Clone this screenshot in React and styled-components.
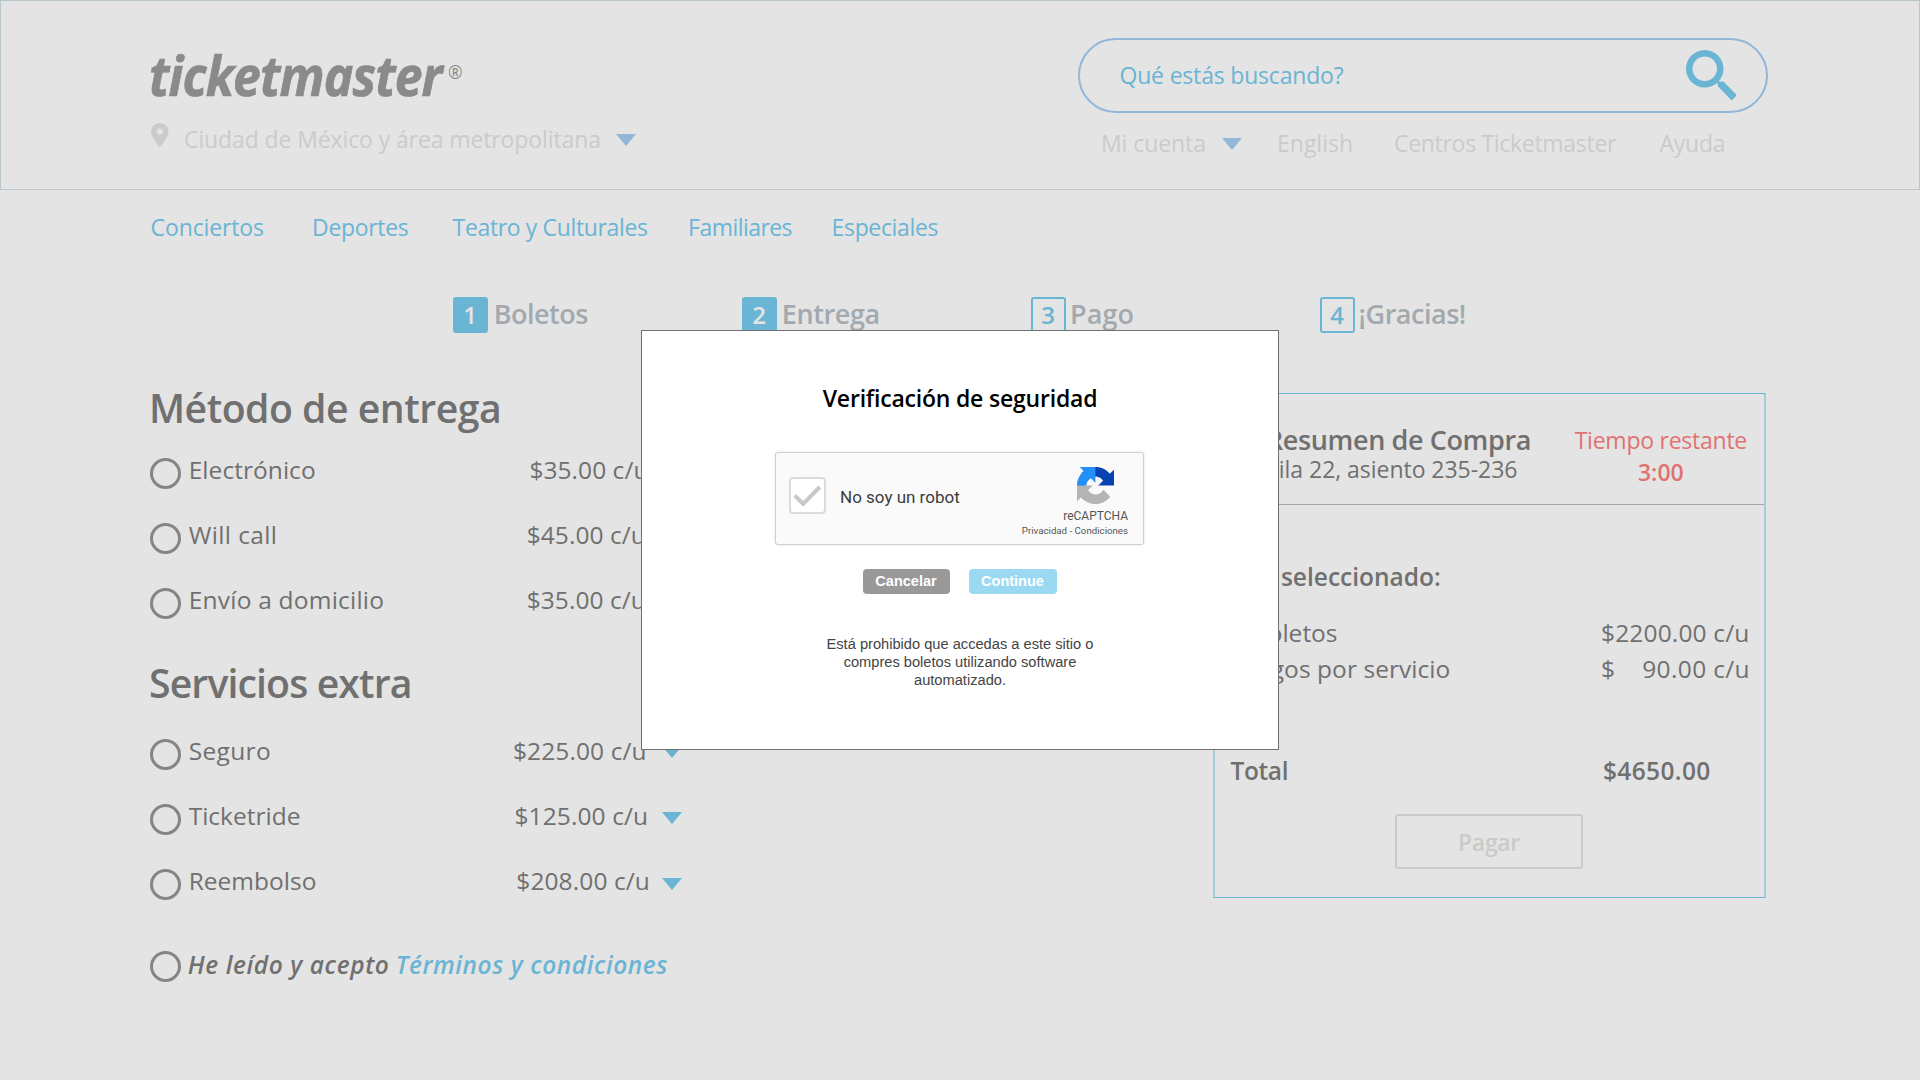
import React from 'react';
import styled, { createGlobalStyle } from 'styled-components';

const sky = '#6ab4d4';
const steel = '#91b7d9';
const muted = '#cbcbcb';
const ink = '#707070';

const GlobalStyle = createGlobalStyle`
  * { box-sizing: border-box; }
  body {
    margin: 0;
    background: #e4e4e4;
    font-family: "Open Sans", "Noto Sans", sans-serif;
    overflow: hidden;
  }
`;

const Page = styled.div`
  position: relative;
  display: flex;
  flex-direction: column;
  width: 1920px;
  height: 1080px;
  overflow: hidden;
  background: #e4e4e4;
  color: ${ink};
  white-space: nowrap;
`;

const Tracked = styled.span`
  letter-spacing: ${(p) => p.$ls || 0}px;
`;

/* Header */
const Header = styled.header`
  display: flex;
  justify-content: space-between;
  height: 190px;
  padding: 0 151px 0 149px;
  border: 1px solid #bac7cc;
`;

const Brand = styled.div`
  display: flex;
  flex-direction: column;
`;

const LogoRow = styled.div`
  display: flex;
  height: 60px;
  margin-top: 43px;
  color: #8a8a8a;
`;

const Logo = styled.div`
  width: 299px;
  margin-left: -1px;
  font-size: 55px;
  line-height: 61px;
  font-weight: 700;
  font-style: italic;
  letter-spacing: -1px;
  -webkit-text-stroke: 0.7px #8a8a8a;
  transform: scaleX(0.907);
  transform-origin: left;
`;

const Registered = styled.span`
  margin-top: 17px;
  font-size: 17.5px;
  line-height: 22px;
`;

const Location = styled.div`
  display: flex;
  align-items: flex-start;
  margin-top: 19px;
  padding-left: 1px;
  font-size: 23px;
  line-height: 32px;
  color: ${muted};
`;

const Place = styled(Tracked)`
  margin-left: 15.5px;
`;

const Caret = styled.i`
  width: 0;
  height: 0;
  margin: ${(p) => p.$top || 0}px 0 0 ${(p) => p.$left || 0}px;
  border: 10px solid transparent;
  border-bottom: 0;
  border-top: 12px solid ${(p) => p.$color || sky};
`;

const HeaderTools = styled.div`
  display: flex;
  flex-direction: column;
  width: 690px;
  padding-top: 37px;
`;

const SearchBox = styled.div`
  display: flex;
  align-items: center;
  justify-content: space-between;
  height: 75px;
  padding: 0 29.5px 1px 39.5px;
  border: 2px solid ${steel};
  border-radius: 38px;
  font-size: 23px;
  color: ${sky};
`;

const AccountLinks = styled.div`
  display: grid;
  grid-template-columns: 121px 55px 117px 265.4px auto;
  margin-top: 14px;
  padding-left: 23px;
  font-size: 23px;
  line-height: 32px;
  color: ${muted};
`;

/* Category nav and steps */
const Nav = styled.nav`
  display: grid;
  grid-template-columns: 161.5px 140.5px 235.5px 143.5px auto;
  margin-top: 17px;
  padding-left: 150.6px;
  font-size: 23px;
  line-height: 40px;
  color: ${sky};
`;

const Steps = styled.ol`
  display: grid;
  grid-template-columns: repeat(4, 289px);
  margin: 50px 0 0;
  padding: 0 0 0 453px;
  list-style: none;
`;

const Step = styled.li`
  display: flex;
  gap: ${(p) => p.$gap}px;
  height: 36px;
`;

const StepNumber = styled.span`
  display: flex;
  align-items: center;
  justify-content: center;
  width: 35px;
  height: 36px;
  padding-right: 1px;
  border: 2px solid ${sky};
  border-radius: 3px;
  background: ${(p) => (p.$done ? sky : 'transparent')};
  color: ${(p) => (p.$done ? '#e4e4e4' : sky)};
  font-size: 24px;
  line-height: 34px;
  font-weight: 600;
`;

const StepLabel = styled(Tracked)`
  font-size: 27px;
  line-height: 33px;
  font-weight: 600;
  color: #a2a9af;
`;

/* Main columns */
const Main = styled.main`
  display: flex;
  justify-content: space-between;
  align-items: flex-start;
  padding: 0 154px 0 150px;
`;

const Options = styled.section`
  width: 532px;
  padding-top: 48px;
`;

const Heading = styled.h2`
  margin: ${(p) => p.$top || 0}px 0 ${(p) => p.$bottom}px -1px;
  font-size: 39.2px;
  line-height: 54px;
  font-weight: 600;
  letter-spacing: ${(p) => p.$ls}px;
`;

const OptionRow = styled.div`
  display: flex;
  align-items: flex-start;
  height: 31px;
  margin-bottom: 34px;
  font-size: 24.5px;
  line-height: 24px;
`;

const Radio = styled.span`
  width: 31px;
  height: 31px;
  margin-right: ${(p) => p.$gap || 7.7}px;
  border: 3px solid #858585;
  border-radius: 50%;
`;

const OptionLabel = styled(Tracked)`
  flex: 1;
`;

const Price = styled(Tracked)`
  margin-right: ${(p) => p.$gap}px;
`;

const TermsRow = styled.div`
  display: flex;
  align-items: flex-start;
  height: 31px;
  margin-top: 51px;
  font-size: 24.5px;
  line-height: 28px;
  font-weight: 600;
  font-style: italic;
`;

const TermsLink = styled(Tracked)`
  margin-left: 6.4px;
  color: ${sky};
`;

/* Purchase summary */
const Summary = styled.aside`
  width: 553px;
  height: 505px;
  margin-top: 60px;
  border: 2px solid #a3ccdc;
  border-top: 1px solid #6bb0d0;
  border-bottom: 1px solid #6bb0d0;
  font-size: 24.5px;
`;

const SummaryHead = styled.div`
  display: flex;
  justify-content: space-between;
  height: 111px;
  padding: 29px 17px 0 51px;
  border-bottom: 1px solid #a6a6a6;
`;

const Stack = styled.div`
  display: flex;
  flex-direction: column;
`;

const SummaryTitle = styled(Tracked)`
  font-size: 27px;
  line-height: 34px;
  font-weight: 600;
`;

const Seats = styled(Tracked)`
  margin-left: 1px;
  font-size: 23px;
  line-height: 25px;
`;

const Timer = styled(Stack)`
  align-items: center;
  padding-top: 1px;
  font-size: 23px;
  line-height: 32px;
  color: #e27272;

  b { font-weight: 600; }
`;

const Selected = styled.div`
  margin: 55px 0 22px;
  padding-left: 15px;
  line-height: 33px;
  font-weight: 600;
`;

const SummaryRow = styled.div`
  display: flex;
  justify-content: space-between;
  margin-top: ${(p) => p.$top || 0}px;
  padding: 0 14px 0 ${(p) => (p.$strong ? 15.5 : 16.5)}px;
  line-height: 36px;
  font-weight: ${(p) => (p.$strong ? 600 : 400)};
`;

const Amount = styled.span`
  display: flex;
  justify-content: space-between;
  width: 149px;
  padding-left: ${(p) => p.$indent || 0}px;
`;

const PayButton = styled.button`
  display: block;
  width: 188px;
  height: 55px;
  margin: 25px 0 0 180px;
  padding: 0;
  border: 2px solid #cacaca;
  border-radius: 3px;
  background: transparent;
  color: #cacaca;
  font: 600 23px "Open Sans", sans-serif;
  letter-spacing: -0.3px;
`;

/* Security dialog */
const Dialog = styled.div`
  position: absolute;
  left: 641px;
  top: 330px;
  display: flex;
  flex-direction: column;
  align-items: center;
  width: 638px;
  height: 420px;
  border: 1px solid #707070;
  background: #fff;
`;

const DialogTitle = styled.h3`
  margin: 51px 0 38px;
  font-size: 23px;
  line-height: 32px;
  font-weight: 600;
  letter-spacing: -0.2px;
  color: #000;
`;

const Captcha = styled.div`
  display: flex;
  align-items: center;
  width: 369px;
  height: 93px;
  margin-right: 1px;
  padding: 0 15px 0 13px;
  border: 1px solid #d0d0d0;
  border-radius: 3px;
  background: #fafafa;
  box-shadow: 0 0 3px rgba(0, 0, 0, 0.12);
  font-family: Roboto, sans-serif;
`;

const CheckBox = styled.span`
  display: flex;
  width: 37px;
  height: 37px;
  margin-top: -6px;
  border: 2px solid #dcdcdc;
  border-radius: 4px;
  background: #fff;
`;

const CaptchaLabel = styled.span`
  flex: 1;
  margin: -4px 0 0 14px;
  font-size: 17px;
  color: #3c3c3c;
`;

const CaptchaBrand = styled.div`
  display: flex;
  flex-direction: column;
  align-items: flex-end;
  padding-top: 6px;
  color: #555;

  svg { margin: 0 14px 3px 0; }
`;

const CaptchaName = styled.span`
  font-size: 12px;
  line-height: 18px;
`;

const CaptchaLegal = styled.span`
  font-size: 9.7px;
  line-height: 12px;
`;

const Buttons = styled.div`
  display: flex;
  gap: 19px;
  margin: 24px 0 41px;
`;

const DialogButton = styled.button`
  width: ${(p) => (p.$primary ? 88 : 87)}px;
  height: 25px;
  padding: 0 1px 1px 0;
  border: 0;
  border-radius: 4px;
  background: ${(p) => (p.$primary ? '#9bd9f3' : '#999')};
  color: #fff;
  font: 700 14.5px "Liberation Sans", Arial, sans-serif;
`;

const Warning = styled.p`
  margin: 0;
  font-family: "Liberation Sans", Arial, sans-serif;
  font-size: 14.65px;
  line-height: 18.2px;
  text-align: center;
  color: #444;
`;

const PinIcon = () => (
  <svg width="17.5" height="24.5" viewBox="5 2 14 20" fill={muted} preserveAspectRatio="none" style={undefined}>
    <path d="M12 2C8.13 2 5 5.13 5 9c0 5.25 7 13 7 13s7-7.75 7-13c0-3.87-3.13-7-7-7zm0 9.5a2.5 2.5 0 0 1 0-5 2.5 2.5 0 0 1 0 5z" />
  </svg>
);

const SearchIcon = () => (
  <svg width="50.5" height="50.5" viewBox="3 3 17.49 17.49" fill={sky}>
    <path d="M15.5 14h-.79l-.28-.27C15.41 12.59 16 11.11 16 9.5 16 5.91 13.09 3 9.5 3S3 5.91 3 9.5 5.91 16 9.5 16c1.61 0 3.09-.59 4.23-1.57l.27.28v.79l4.8 4.99L20.49 18.8l-4.99-4.8zm-6-.25C7.15 13.75 5.25 11.85 5.25 9.5S7.15 5.25 9.5 5.25s4.25 1.9 4.25 4.25-1.9 4.25-4.25 4.25z" />
    <path d="M14.9 14.6 19.5 19.2" stroke={sky} strokeWidth="2.4" />
  </svg>
);

const CheckIcon = () => (
  <svg width="33" height="33" viewBox="0 0 33 33" fill="none" stroke="#c8c8c8" strokeWidth="4">
    <path d="M3.7 16.5 12.2 25 28.8 8" />
  </svg>
);

const CaptchaIcon = () => (
  <svg width="37" height="37" viewBox="0 0 64 64">
    <path fill="#0642b0" d="M64 31.955l-.033-1.37V4.687l-7.16 7.16C50.948 4.674 42.033.093 32.05.093c-10.4 0-19.622 4.96-25.458 12.64l11.736 11.86a15.55 15.55 0 0 1 4.754-5.334c2.05-1.6 4.952-2.906 8.968-2.906.485 0 .86.057 1.135.163 4.976.393 9.288 3.14 11.828 7.124l-8.307 8.307L64 31.953" />
    <path fill="#2190f8" d="M31.862.094l-1.37.033H4.594l7.16 7.16C4.58 13.147 0 22.06 0 32.046c0 10.4 4.96 19.622 12.64 25.458L24.5 45.768a15.55 15.55 0 0 1-5.334-4.754c-1.6-2.05-2.906-4.952-2.906-8.968 0-.485.057-.86.163-1.135.393-4.976 3.14-9.288 7.124-11.828l8.307 8.307L31.86.095" />
    <path fill="#b4b4b4" d="M.001 32.045l.033 1.37v25.898l7.16-7.16c5.86 7.173 14.774 11.754 24.76 11.754 10.4 0 19.622-4.96 25.458-12.64l-11.736-11.86a15.55 15.55 0 0 1-4.754 5.334c-2.05 1.6-4.952 2.906-8.968 2.906-.485 0-.86-.057-1.135-.163-4.976-.393-9.288-3.14-11.828-7.124l8.307-8.307c-10.522.04-22.4.066-27.295-.005" />
  </svg>
);

const categories = [
  ['Conciertos', -0.13],
  ['Deportes', -0.33],
  ['Teatro y Culturales', -0.36],
  ['Familiares', -0.55],
  ['Especiales', -0.35],
];

const steps = [
  { label: 'Boletos', ls: -0.52, gap: 5.8, done: true },
  { label: 'Entrega', ls: -0.4, gap: 4.8, done: true },
  { label: 'Pago', ls: 0.1, gap: 4 },
  { label: '¡Gracias!', ls: -0.48, gap: 3.6 },
];

const delivery = [
  { label: 'Electrónico', ls: 0.05, price: '$35.00 c/u', pls: 0.05, gap: 13.5 },
  { label: 'Will call', ls: 0.38, price: '$45.00 c/u', pls: 0.05, gap: 16.2 },
  { label: 'Envío a domicilio', ls: 0.22, price: '$35.00 c/u', pls: 0.05, gap: 16.2 },
];

const extras = [
  { label: 'Seguro', ls: 0.35, price: '$225.00 c/u', pls: 0.1, gap: 15.3, caret: 7 },
  { label: 'Ticketride', ls: 0, price: '$125.00 c/u', pls: 0.1, gap: 13.8, caret: 8 },
  { label: 'Reembolso', ls: 0.01, price: '$208.00 c/u', pls: 0.1, gap: 12, caret: 9 },
];

const Option = ({ item }) => (
  <OptionRow>
    <Radio />
    <OptionLabel $ls={item.ls}>{item.label}</OptionLabel>
    <Price $ls={item.pls} $gap={item.gap}>{item.price}</Price>
    <Caret $top={item.caret || 8} />
  </OptionRow>
);

export default function App() {
  return (
    <Page>
      <GlobalStyle />
      <Header>
        <Brand>
          <LogoRow>
            <Logo>ticketmaster</Logo>
            <Registered>®</Registered>
          </LogoRow>
          <Location>
            <PinIcon />
            <Place $ls={-0.11}>Ciudad de México y área metropolitana</Place>
            <Caret $color={steel} $left={15} $top={11} />
          </Location>
        </Brand>
        <HeaderTools>
          <SearchBox>
            <Tracked $ls={-0.19}>Qué estás buscando?</Tracked>
            <SearchIcon />
          </SearchBox>
          <AccountLinks>
            <Tracked $ls={-0.08}>Mi cuenta</Tracked>
            <Caret $color={steel} $top={11} />
            <span>English</span>
            <Tracked $ls={-0.3}>Centros Ticketmaster</Tracked>
            <Tracked $ls={-0.2}>Ayuda</Tracked>
          </AccountLinks>
        </HeaderTools>
      </Header>

      <Nav>
        {categories.map(([name, ls]) => (
          <Tracked key={name} $ls={ls}>{name}</Tracked>
        ))}
      </Nav>

      <Steps>
        {steps.map((s, i) => (
          <Step key={s.label} $gap={s.gap}>
            <StepNumber $done={s.done}>{i + 1}</StepNumber>
            <StepLabel $ls={s.ls}>{s.label}</StepLabel>
          </Step>
        ))}
      </Steps>

      <Main>
        <Options>
          <Heading $ls={-0.5} $bottom={23}>Método de entrega</Heading>
          {delivery.map((d) => <Option key={d.label} item={d} />)}
          <Heading $ls={-0.88} $top={37} $bottom={29}>Servicios extra</Heading>
          {extras.map((d) => <Option key={d.label} item={d} />)}
          <TermsRow>
            <Radio $gap={6.7} />
            <Tracked $ls={0.58}>He leído y acepto</Tracked>
            <TermsLink $ls={0.54}>Términos y condiciones</TermsLink>
          </TermsRow>
        </Options>

        <Summary>
          <SummaryHead>
            <Stack>
              <SummaryTitle $ls={-0.38}>Resumen de Compra</SummaryTitle>
              <Seats $ls={-0.04}>Fila 22, asiento 235-236</Seats>
            </Stack>
            <Timer>
              <Tracked $ls={-0.25}>Tiempo restante</Tracked>
              <b>3:00</b>
            </Timer>
          </SummaryHead>
          <Selected>Has seleccionado:</Selected>
          <SummaryRow>
            <span>2 Boletos</span>
            <Amount><Tracked $ls={0.16}>$2200.00 c/u</Tracked></Amount>
          </SummaryRow>
          <SummaryRow>
            <Tracked $ls={0.06}>Cargos por servicio</Tracked>
            <Amount><span>$</span><Tracked $ls={0.35}>90.00 c/u</Tracked></Amount>
          </SummaryRow>
          <SummaryRow $strong $top={66}>
            <Tracked $ls={-0.37}>Total</Tracked>
            <Amount $indent={2}><Tracked $ls={0.36}>$4650.00</Tracked></Amount>
          </SummaryRow>
          <PayButton>Pagar</PayButton>
        </Summary>
      </Main>

      <Dialog>
        <DialogTitle>Verificación de seguridad</DialogTitle>
        <Captcha>
          <CheckBox><CheckIcon /></CheckBox>
          <CaptchaLabel>No soy un robot</CaptchaLabel>
          <CaptchaBrand>
            <CaptchaIcon />
            <CaptchaName>reCAPTCHA</CaptchaName>
            <CaptchaLegal>Privacidad - Condiciones</CaptchaLegal>
          </CaptchaBrand>
        </Captcha>
        <Buttons>
          <DialogButton>Cancelar</DialogButton>
          <DialogButton $primary>Continue</DialogButton>
        </Buttons>
        <Warning>
          Está prohibido que accedas a este sitio o<br />
          compres boletos utilizando software<br />
          automatizado.
        </Warning>
      </Dialog>
    </Page>
  );
}
